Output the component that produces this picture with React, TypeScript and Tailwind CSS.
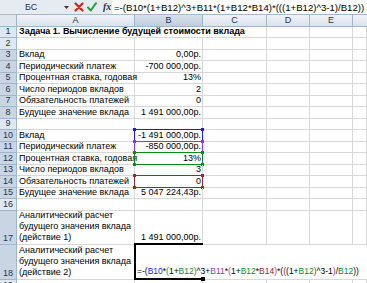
import React from "react";

const FONT = { fontFamily: '"Liberation Sans", Arial, sans-serif' };

function Corners({ bg }: { bg: string }) {
  return (
    <>
      <div className={`absolute -left-[2px] -top-[2px] w-[3px] h-[3px] ${bg}`} />
      <div className={`absolute -right-[2px] -top-[2px] w-[3px] h-[3px] ${bg}`} />
      <div className={`absolute -left-[2px] -bottom-[2px] w-[3px] h-[3px] ${bg}`} />
      <div className={`absolute -right-[2px] -bottom-[2px] w-[3px] h-[3px] ${bg}`} />
    </>
  );
}

function RangeRing({ kind }: { kind: string }) {
  if (kind === "blue")
    return (
      <div className="absolute -inset-px border border-[#1a1aff] pointer-events-none">
        <Corners bg="bg-[#1a1aff]" />
      </div>
    );
  if (kind === "purple")
    return (
      <div className="absolute -inset-px border border-[#a030d0] pointer-events-none">
        <Corners bg="bg-[#a030d0]" />
      </div>
    );
  if (kind === "green")
    return (
      <div className="absolute -inset-px border border-[#0a8a1a] pointer-events-none">
        <Corners bg="bg-[#0a8a1a]" />
      </div>
    );
  if (kind === "red")
    return (
      <div className="absolute -inset-px border border-[#9a2a2a] pointer-events-none">
        <Corners bg="bg-[#9a2a2a]" />
      </div>
    );
  return null;
}

function RowHead({ n, hl }: { n: number; hl?: boolean }) {
  return (
    <div
      className={`w-[17px] shrink-0 border-r border-b border-[#9eb6ce] flex items-end justify-center text-[9px] leading-[11px] text-[#1e3555] ${
        hl ? "bg-[#c9d5e3]" : "bg-[#e1e7ef]"
      }`}
    >
      {n}
    </div>
  );
}

const G = "border-r border-b border-[#d8d8d8]";

function Rest() {
  return (
    <>
      <div className={`w-[64px] shrink-0 ${G}`} />
      <div className={`w-[43px] shrink-0 ${G}`} />
      <div className={`w-[43px] shrink-0 ${G}`} />
      <div className={`flex-1 ${G}`} />
    </>
  );
}

type RowData = { n: number; a: string; b: string; ring?: string; hl?: boolean };

const rows: RowData[] = [
  { n: 2, a: "", b: "" },
  { n: 3, a: "Вклад", b: "0,00р.", hl: true },
  { n: 4, a: "Периодический платеж", b: "-700 000,00р.", hl: true },
  { n: 5, a: "Процентная ставка, годовая", b: "13%", hl: true },
  { n: 6, a: "Число периодов вкладов", b: "2", hl: true },
  { n: 7, a: "Обязательность платежей", b: "0", hl: true },
  { n: 8, a: "Будущее значение вклада", b: "1 491 000,00р.", hl: true },
  { n: 9, a: "", b: "" },
  { n: 10, a: "Вклад", b: "-1 491 000,00р.", ring: "blue", hl: true },
  { n: 11, a: "Периодический платеж", b: "-850 000,00р.", ring: "purple", hl: true },
  { n: 12, a: "Процентная ставка, годовая", b: "13%", ring: "green", hl: true },
  { n: 13, a: "Число периодов вкладов", b: "3", hl: true },
  { n: 14, a: "Обязательность платежей", b: "0", ring: "red", hl: true },
  { n: 15, a: "Будущее значение вклада", b: "5 047 224,43р.", hl: true },
  { n: 16, a: "", b: "" },
];

function Row({ r }: { r: RowData }) {
  return (
    <div className="flex h-[11.47px]">
      <RowHead n={r.n} hl={r.hl} />
      <div className={`w-[118px] shrink-0 ${G} px-[2px] flex items-end text-[9px] leading-[11px] whitespace-nowrap`}>
        {r.a}
      </div>
      <div
        className={`w-[68px] shrink-0 ${G} px-[1px] flex items-end justify-end text-[9px] leading-[11px] whitespace-nowrap relative z-10`}
      >
        {r.b}
        {r.ring && <RangeRing kind={r.ring} />}
      </div>
      <Rest />
    </div>
  );
}

const K = "text-black";
const BL = "text-[#1a1aff]";
const GR = "text-[#0a8a1a]";
const PU = "text-[#a030d0]";
const RD = "text-[#9a2a2a]";

const formulaParts: [string, string][] = [
  ["=-(", K],
  ["B10", BL],
  ["*", K],
  ["(", GR],
  ["1+", K],
  ["B12", GR],
  [")", GR],
  ["^3+", K],
  ["B11", PU],
  ["*", K],
  ["(", PU],
  ["1+", K],
  ["B12", GR],
  ["*", K],
  ["B14", RD],
  [")", PU],
  ["*", K],
  ["(", K],
  ["(", RD],
  ["(", K],
  ["1+", K],
  ["B12", GR],
  [")", RD],
  ["^3-1", K],
  [")", PU],
  ["/", K],
  ["B12", GR],
  ["))", K],
];

export default function App() {
  return (
    <div className="w-[367px] h-[283px] overflow-hidden bg-white text-black" style={FONT}>
      {/* formula bar */}
      <div className="flex h-[15px] border-b border-[#a9b8c8] bg-[#e6ebf1]">
        <div className="w-[112px] shrink-0 flex items-center relative">
          <span className="absolute left-[25px] top-[2px] text-[9px] leading-[10px] text-[#333]">БС</span>
          <svg className="absolute left-[64px] top-[6px]" width="5" height="3" viewBox="0 0 5 3">
            <path d="M0 0h5L2.5 3z" fill="#333" />
          </svg>
          <svg className="absolute left-[74px] top-[2px]" width="10" height="10" viewBox="0 0 10 10">
            <path d="M1.5 1.5L8.5 8.5M8.5 1.5L1.5 8.5" stroke="#d9261c" strokeWidth="2.2" strokeLinecap="round" />
          </svg>
          <svg className="absolute left-[87px] top-[2px]" width="10" height="10" viewBox="0 0 10 10">
            <path d="M1 5.5L3.8 8.5L9 1.2" stroke="#2f9e3a" strokeWidth="2" fill="none" strokeLinecap="round" strokeLinejoin="round" />
          </svg>
          <span
            className="absolute left-[103px] top-[1px] text-[10px] leading-[11px] italic font-bold text-[#333]"
            style={{ fontFamily: '"Liberation Serif", "DejaVu Serif", serif' }}
          >
            fx
          </span>
        </div>
        <div className="flex-1 bg-white pl-[2px] flex items-center text-[9.6px] leading-[11px] whitespace-nowrap overflow-hidden">
          =-(B10*(1+B12)^3+B11*(1+B12*B14)*(((1+B12)^3-1)/B12))
        </div>
      </div>

      {/* column headers */}
      <div className="flex h-[12px] text-[9px] leading-[11px] text-[#1e3555]">
        <div className="w-[17px] shrink-0 border-r border-b border-[#9eb6ce] bg-[#dfe6ee]" />
        <div className="w-[118px] shrink-0 border-r border-b border-[#9eb6ce] bg-gradient-to-b from-[#f0f3f8] to-[#dbe3ec] flex items-center justify-center">A</div>
        <div className="w-[68px] shrink-0 border-r border-b border-[#9eb6ce] bg-gradient-to-b from-[#d8e1eb] to-[#bfcddd] flex items-center justify-center">B</div>
        <div className="w-[64px] shrink-0 border-r border-b border-[#9eb6ce] bg-gradient-to-b from-[#f0f3f8] to-[#dbe3ec] flex items-center justify-center">C</div>
        <div className="w-[43px] shrink-0 border-r border-b border-[#9eb6ce] bg-gradient-to-b from-[#f0f3f8] to-[#dbe3ec] flex items-center justify-center">D</div>
        <div className="w-[43px] shrink-0 border-r border-b border-[#9eb6ce] bg-gradient-to-b from-[#f0f3f8] to-[#dbe3ec] flex items-center justify-center">E</div>
        <div className="flex-1 border-b border-[#9eb6ce] bg-gradient-to-b from-[#f0f3f8] to-[#dbe3ec]" />
      </div>

      {/* row 1 */}
      <div className="flex h-[11.47px]">
        <RowHead n={1} />
        <div className={`w-[250px] shrink-0 ${G} px-[2px] flex items-end text-[9px] leading-[11px] font-bold whitespace-nowrap`}>
          Задача 1. Вычисление будущей стоимости вклада
        </div>
        <div className={`w-[43px] shrink-0 ${G}`} />
        <div className={`w-[43px] shrink-0 ${G}`} />
        <div className={`flex-1 ${G}`} />
      </div>

      {rows.map((r) => (
        <Row key={r.n} r={r} />
      ))}

      {/* row 17 */}
      <div className="flex h-[34px]">
        <RowHead n={17} hl />
        <div className={`w-[118px] shrink-0 ${G} px-[2px] flex flex-col justify-end text-[9px] leading-[11px] whitespace-nowrap pb-[1px]`}>
          <span>Аналитический расчет</span>
          <span>будущего значения вклада</span>
          <span>(действие 1)</span>
        </div>
        <div className={`w-[68px] shrink-0 ${G} px-[1px] flex items-end justify-end text-[9px] leading-[11px] whitespace-nowrap pb-[1px]`}>
          1 491 000,00р.
        </div>
        <Rest />
      </div>

      {/* row 18 (editing) */}
      <div className="flex h-[35px]">
        <RowHead n={18} hl />
        <div className={`w-[118px] shrink-0 ${G} px-[2px] flex flex-col justify-end text-[9px] leading-[11px] whitespace-nowrap pb-[1px]`}>
          <span>Аналитический расчет</span>
          <span>будущего значения вклада</span>
          <span>(действие 2)</span>
        </div>
        <div className="flex-1 relative bg-white border-b border-[#d8d8d8] flex items-end pl-[2px] pb-[2px] text-[8.5px] leading-[11px] whitespace-nowrap overflow-visible">
          {formulaParts.map(([t, c], i) => (
            <span key={i} className={c}>
              {t}
            </span>
          ))}
          <div className="absolute -left-[1px] -top-[2px] w-[69px] -bottom-[1px] border-l-2 border-t-2 border-b-2 border-black pointer-events-none">
            <div className="absolute -right-[2px] -bottom-[3px] w-[4px] h-[4px] bg-black" />
          </div>
        </div>
      </div>

      {/* row 19 */}
      <div className="flex h-[12px]">
        <RowHead n={19} />
        <div className={`w-[118px] shrink-0 ${G}`} />
        <div className={`w-[68px] shrink-0 ${G}`} />
        <Rest />
      </div>
    </div>
  );
}
